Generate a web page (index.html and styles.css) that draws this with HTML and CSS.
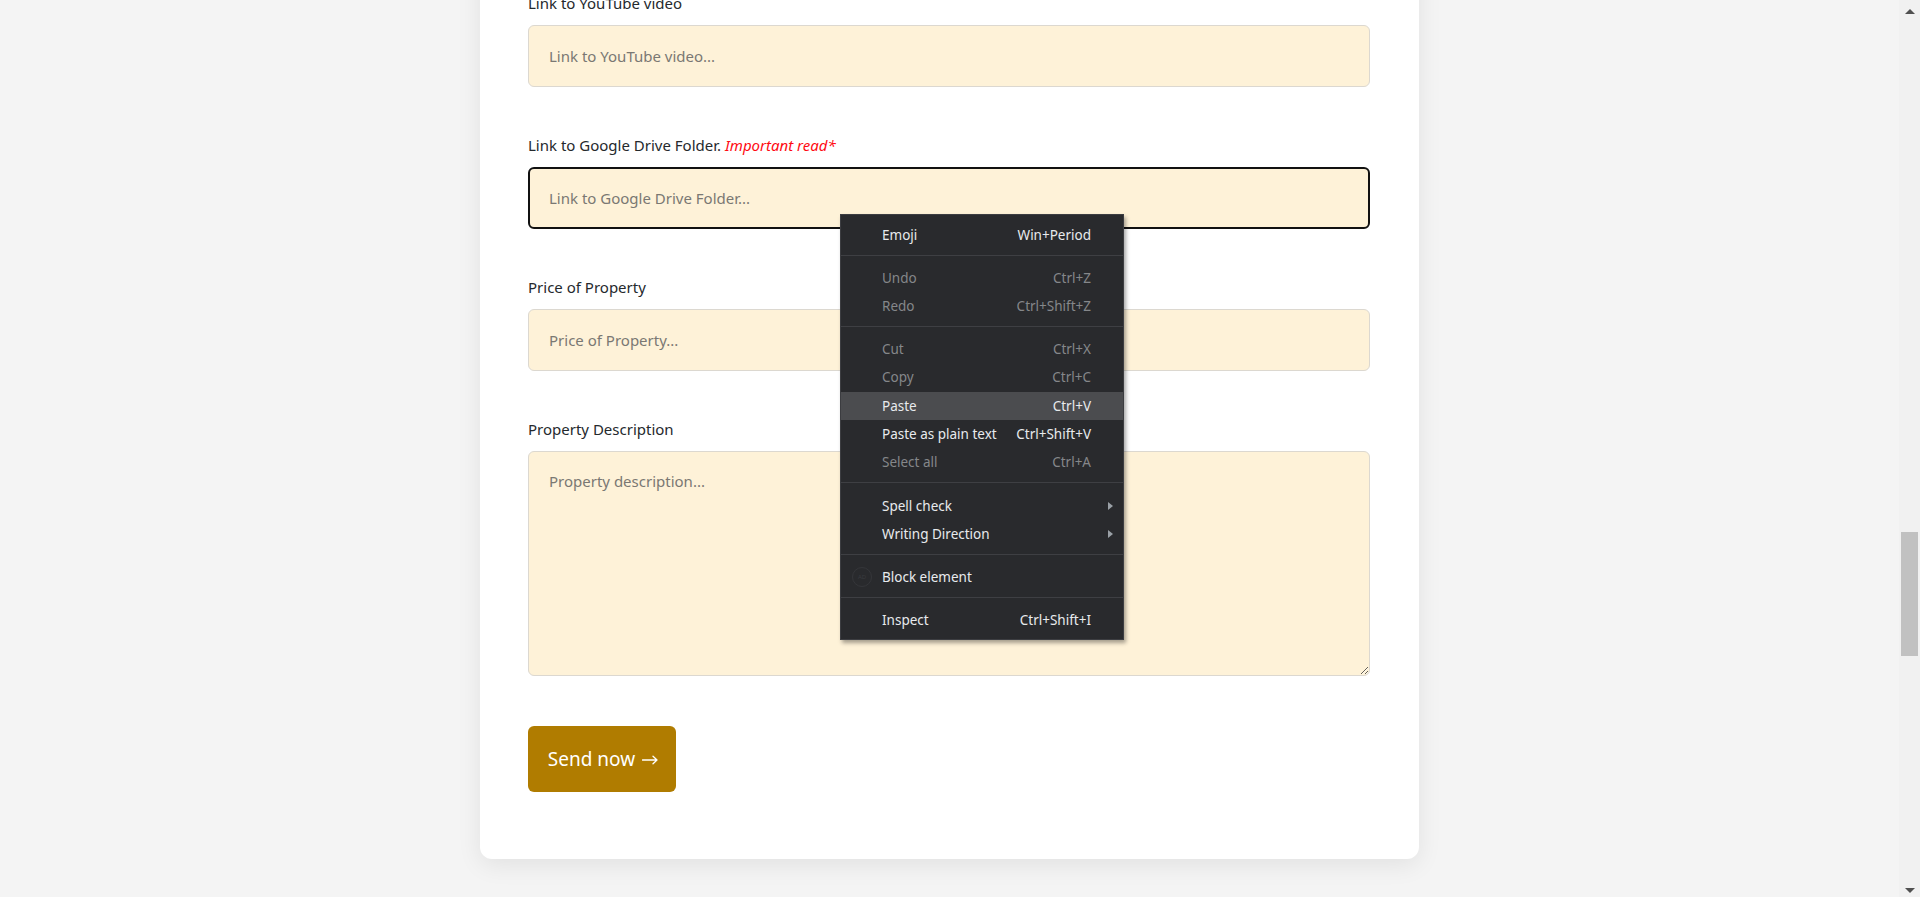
FILE: index.html
```html
<!DOCTYPE html>
<html lang="en">
<head>
<meta charset="utf-8">
<title>Property form</title>
<link rel="stylesheet" href="styles.css">
</head>
<body>
<div class="viewport">
  <main class="page">
    <div class="card">
      <form class="form">
        <div class="field">
          <label class="label">Link to YouTube video</label>
          <input class="input" type="text" placeholder="Link to YouTube video...">
        </div>
        <div class="field">
          <label class="label">Link to Google Drive Folder. <em class="important">Important read*</em></label>
          <input class="input input-focus" type="text" placeholder="Link to Google Drive Folder...">
        </div>
        <div class="field">
          <label class="label">Price of Property</label>
          <input class="input" type="text" placeholder="Price of Property...">
        </div>
        <div class="field">
          <label class="label">Property Description</label>
          <textarea class="input textarea" placeholder="Property description..."></textarea>
        </div>
        <button class="send" type="button">Send now <svg class="send-arrow" width="16" height="10" viewBox="0 0 16 10" aria-hidden="true"><path d="M0.5 5H15M11 1.2L15 5L11 8.8" fill="none" stroke="#fff" stroke-width="1.3" stroke-linecap="round" stroke-linejoin="round"/></svg></button>
      </form>
    </div>
  </main>
  <div class="scrollbar">
    <div class="arrow arrow-up"></div>
    <div class="track"><div class="thumb"></div></div>
    <div class="arrow arrow-down"></div>
  </div>
</div>

<div class="menu">
  <div class="item"><span>Emoji</span><span class="key">Win+Period</span></div>
  <div class="sep"></div>
  <div class="item disabled"><span>Undo</span><span class="key">Ctrl+Z</span></div>
  <div class="item disabled"><span>Redo</span><span class="key">Ctrl+Shift+Z</span></div>
  <div class="sep"></div>
  <div class="item disabled"><span>Cut</span><span class="key">Ctrl+X</span></div>
  <div class="item disabled"><span>Copy</span><span class="key">Ctrl+C</span></div>
  <div class="item active"><span>Paste</span><span class="key">Ctrl+V</span></div>
  <div class="item"><span>Paste as plain text</span><span class="key">Ctrl+Shift+V</span></div>
  <div class="item disabled"><span>Select all</span><span class="key">Ctrl+A</span></div>
  <div class="sep sep-wide"></div>
  <div class="item sub"><span>Spell check</span><span class="caret"></span></div>
  <div class="item sub"><span>Writing Direction</span><span class="caret"></span></div>
  <div class="sep"></div>
  <div class="item"><span class="adicon">AD</span><span>Block element</span></div>
  <div class="sep"></div>
  <div class="item"><span>Inspect</span><span class="key">Ctrl+Shift+I</span></div>
</div>
</body>
</html>
```
FILE: styles.css
```css
* { box-sizing: border-box; }

html, body {
  margin: 0;
  padding: 0;
  height: 100%;
  overflow: hidden;
}

body {
  background: #f4f4f4;
  font-family: "Noto Sans", "Open Sans", sans-serif;
  color: #212529;
}

.viewport {
  display: flex;
  height: 897px;
}

.page {
  flex: 1;
  display: flex;
  justify-content: center;
  align-items: flex-start;
  overflow: hidden;
}

.card {
  width: 939px;
  margin-top: -40px;
  padding: 33px 49px 67px 48px;
  background: #fff;
  border-radius: 12px;
  box-shadow: 0 6px 24px rgba(0, 0, 0, 0.08);
}

.form {
  display: flex;
  flex-direction: column;
  align-items: flex-start;
}

.field {
  width: 100%;
  display: flex;
  flex-direction: column;
  margin-bottom: 48px;
}

.field:nth-child(4) { margin-bottom: 50px; }

.label {
  font-size: 15px;
  line-height: 20px;
  margin-bottom: 12px;
  color: #25292d;
}

.important {
  color: #ff0a12;
  font-style: italic;
}

.input {
  width: 100%;
  height: 62px;
  padding: 0 20px;
  background: #fef2d8;
  border: 1px solid #dcd8d0;
  border-radius: 6px;
  font-family: inherit;
  font-size: 15px;
  color: #212529;
  outline: none;
}

.input::placeholder { color: #7a7873; }

.input-focus {
  border: 2px solid #111;
  padding-left: 19px;
}

.textarea {
  height: 225px;
  padding-top: 17px;
  resize: vertical;
  line-height: 24px;
}

.send {
  width: 148px;
  height: 66px;
  background: #b07c00;
  color: #fff;
  border: none;
  border-radius: 6px;
  font-family: inherit;
  font-size: 19px;
  padding: 0 0 0 2px;
  display: flex;
  align-items: center;
  justify-content: center;
  gap: 7px;
}

.send-arrow {
  margin-top: 2px;
}

/* Scrollbar */
.scrollbar {
  width: 21px;
  background: #f1f1f1;
  display: flex;
  flex-direction: column;
  align-items: center;
}

.arrow {
  width: 0;
  height: 0;
  border-left: 5px solid transparent;
  border-right: 5px solid transparent;
}

.arrow-up {
  margin-top: 9px;
  border-bottom: 5px solid #505050;
}

.arrow-down {
  margin-bottom: 4px;
  border-top: 5px solid #505050;
}

.track {
  flex: 1;
  width: 100%;
  padding-left: 2px;
  padding-top: 518px;
}

.thumb {
  width: 17px;
  height: 124px;
  background: #c1c1c1;
}

/* Context menu */
.menu {
  position: absolute;
  left: 840px;
  top: 214px;
  width: 284px;
  padding: 6px 0 5px;
  background: #292a2d;
  border: 1px solid #3c3d41;
  box-shadow: 2px 3px 4px rgba(0, 0, 0, 0.35);
  font-family: "Noto Sans", "Open Sans", sans-serif;
  font-size: 13.5px;
  color: #e8eaed;
}

.item {
  height: 28px;
  display: flex;
  align-items: center;
  justify-content: space-between;
  padding: 0 32px 0 41px;
  position: relative;
}

.item.disabled { color: #85878a; }

.item.active {
  background: #4b4c4f;
  margin-top: 1px;
}

.item.sub { padding-right: 10px; }

.caret {
  width: 0;
  height: 0;
  border-top: 4px solid transparent;
  border-bottom: 4px solid transparent;
  border-left: 5px solid #9aa0a6;
}

.item .adicon {
  position: absolute;
  left: 11px;
  top: 4px;
  width: 20px;
  height: 20px;
  border-radius: 50%;
  border: 1px solid #35363a;
  color: #3a3b3f;
  font-size: 6px;
  display: flex;
  align-items: center;
  justify-content: center;
}

.sep {
  height: 1px;
  margin: 6px 0 8px;
  background: #3e3f43;
}

.sep-wide { margin: 6px 0 9px; }
```
